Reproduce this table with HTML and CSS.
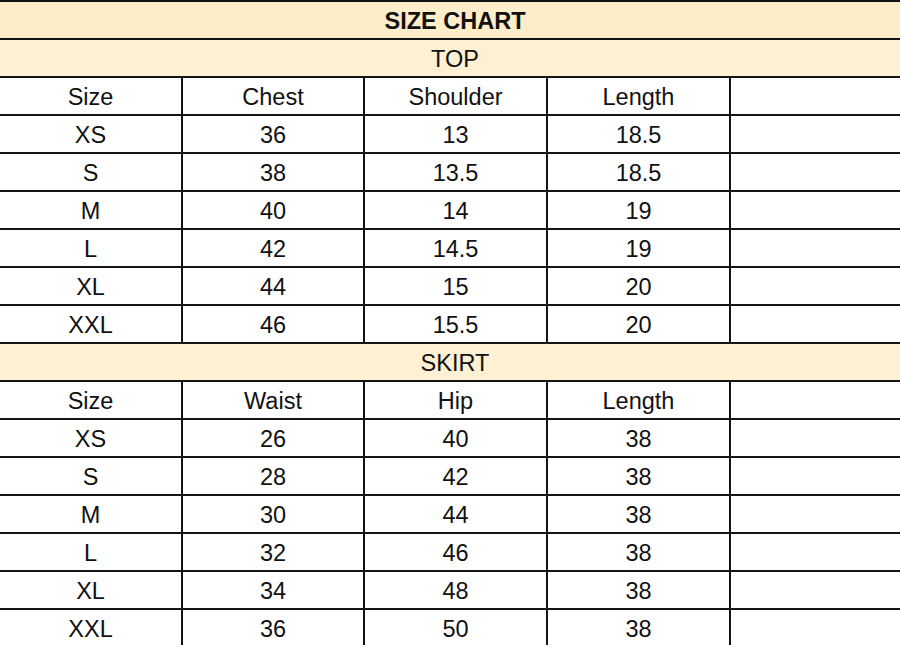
FILE: index.html
```html
<!DOCTYPE html>
<html>
<head>
<meta charset="utf-8">
<link rel="stylesheet" href="styles.css">
</head>
<body>
<div class="chart">
  <div class="row full title">SIZE CHART</div>
  <div class="row full section">TOP</div>
  <div class="row"><div class="cell">Size</div><div class="cell">Chest</div><div class="cell">Shoulder</div><div class="cell">Length</div><div class="cell"></div></div>
  <div class="row"><div class="cell">XS</div><div class="cell">36</div><div class="cell">13</div><div class="cell">18.5</div><div class="cell"></div></div>
  <div class="row"><div class="cell">S</div><div class="cell">38</div><div class="cell">13.5</div><div class="cell">18.5</div><div class="cell"></div></div>
  <div class="row"><div class="cell">M</div><div class="cell">40</div><div class="cell">14</div><div class="cell">19</div><div class="cell"></div></div>
  <div class="row"><div class="cell">L</div><div class="cell">42</div><div class="cell">14.5</div><div class="cell">19</div><div class="cell"></div></div>
  <div class="row"><div class="cell">XL</div><div class="cell">44</div><div class="cell">15</div><div class="cell">20</div><div class="cell"></div></div>
  <div class="row"><div class="cell">XXL</div><div class="cell">46</div><div class="cell">15.5</div><div class="cell">20</div><div class="cell"></div></div>
  <div class="row full section">SKIRT</div>
  <div class="row"><div class="cell">Size</div><div class="cell">Waist</div><div class="cell">Hip</div><div class="cell">Length</div><div class="cell"></div></div>
  <div class="row"><div class="cell">XS</div><div class="cell">26</div><div class="cell">40</div><div class="cell">38</div><div class="cell"></div></div>
  <div class="row"><div class="cell">S</div><div class="cell">28</div><div class="cell">42</div><div class="cell">38</div><div class="cell"></div></div>
  <div class="row"><div class="cell">M</div><div class="cell">30</div><div class="cell">44</div><div class="cell">38</div><div class="cell"></div></div>
  <div class="row"><div class="cell">L</div><div class="cell">32</div><div class="cell">46</div><div class="cell">38</div><div class="cell"></div></div>
  <div class="row"><div class="cell">XL</div><div class="cell">34</div><div class="cell">48</div><div class="cell">38</div><div class="cell"></div></div>
  <div class="row"><div class="cell">XXL</div><div class="cell">36</div><div class="cell">50</div><div class="cell">38</div><div class="cell"></div></div>
</div>
</body>
</html>
```
FILE: styles.css
```css
html, body {
  margin: 0;
  padding: 0;
  background: #ffffff;
  overflow: hidden;
}
body {
  width: 900px;
  height: 645px;
}
.chart {
  width: 910px;
  border-top: 2px solid #141414;
  font-family: "Liberation Sans", Arial, sans-serif;
  font-size: 23.5px;
  color: #111111;
}
.row {
  display: grid;
  grid-template-columns: 181px 182px 183px 183px 1fr;
  height: 36px;
  border-bottom: 2px solid #141414;
}
.row.full {
  display: flex;
  align-items: center;
  justify-content: center;
  box-sizing: border-box;
  height: 38px;
  padding-top: 3px;
}
.title {
  background: #fdedc9;
  font-weight: bold;
}
.section {
  background: #fdf0d3;
}
.cell {
  display: flex;
  align-items: center;
  justify-content: center;
  padding-top: 3px;
  border-left: 2px solid #141414;
}
.cell:first-child {
  border-left: none;
}
```
